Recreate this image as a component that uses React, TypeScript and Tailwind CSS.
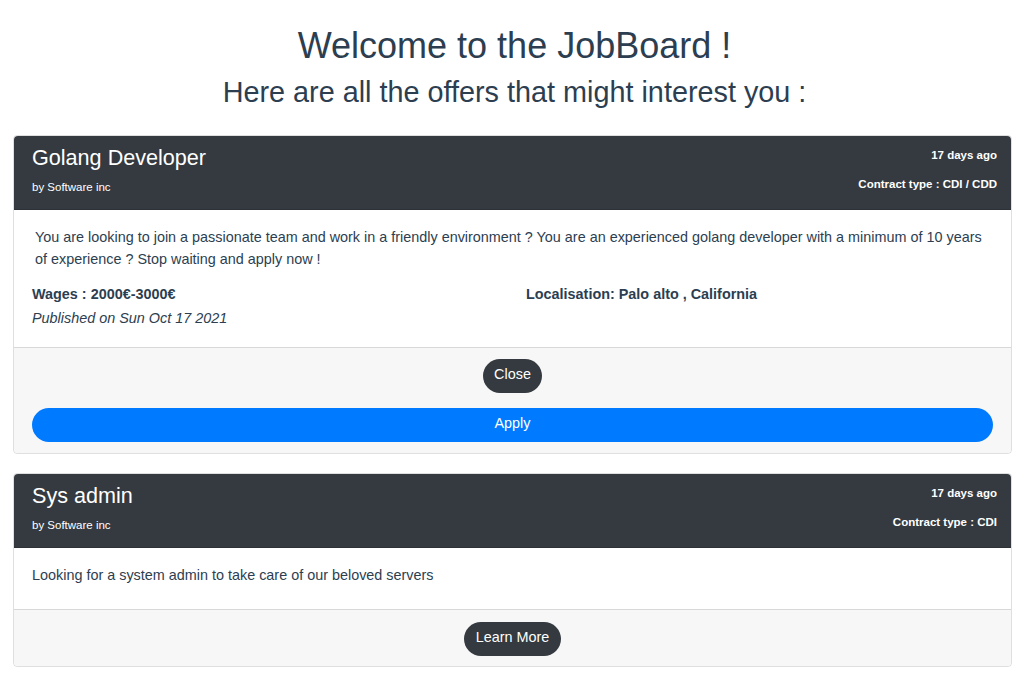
import React from "react";

const font = { fontFamily: '"Liberation Sans", Arial, Helvetica, sans-serif' };

function Header({ title, contract }: { title: string; contract: string }) {
  return (
    <div className="flex justify-between bg-[#343a40] text-white pl-[18px] pr-[14px] pt-[9px] pb-[13px] rounded-t-[4px] border-b border-[rgba(0,0,0,0.125)]">
      <div>
        <div className="text-[21.6px] leading-[26px]">{title}</div>
        <div className="text-[11.5px] leading-[17px] mt-[8px]">by Software inc</div>
      </div>
      <div className="text-right font-bold text-[11.5px]">
        <div className="leading-[17px] mt-[2px]">17 days ago</div>
        <div className="leading-[17px] mt-[12px]">{contract}</div>
      </div>
    </div>
  );
}

export default function App() {
  return (
    <div className="min-h-screen bg-white text-[#2c3e50]" style={font}>
      <div className="text-center pt-[24px]">
        <h1 className="text-[36px] leading-[43px]">Welcome to the JobBoard !</h1>
        <h2 className="text-[28.8px] leading-[35px] mt-[8px]">Here are all the offers that might interest you :</h2>
      </div>
      <div className="pl-[13px] pr-[17px] pt-[25px] pb-[10px] flex flex-col gap-[19px]">
        <div className="border border-[rgba(0,0,0,0.125)] rounded-[4px]">
          <Header title="Golang Developer" contract="Contract type : CDI / CDD" />
          <div className="px-[18px] pt-[17px] pb-[17px] text-[14.4px] leading-[21.6px]">
            <p className="pl-[3px]">
              You are looking to join a passionate team and work in a friendly environment ? You are an experienced golang developer with a minimum of 10 years of experience ? Stop waiting and apply now !
            </p>
            <div className="flex mt-[12px]">
              <div className="w-[494px]">
                <div className="font-bold leading-[24px]">Wages : 2000€-3000€</div>
                <div className="italic leading-[24px]">Published on Sun Oct 17 2021</div>
              </div>
              <div className="font-bold leading-[24px]">Localisation: Palo alto , California</div>
            </div>
          </div>
          <div className="bg-[#f7f7f7] border-t border-[rgba(0,0,0,0.125)] px-[18px] pt-[11px] pb-[11px] flex flex-col items-center rounded-b-[4px]">
            <button className="bg-[#343a40] text-white text-[14.4px] leading-[22px] px-[11px] pt-[4px] pb-[8px] rounded-full">Close</button>
            <button className="w-full mt-[15px] bg-[#007bff] text-white text-[14.4px] leading-[22px] pt-[4px] pb-[8px] rounded-full">Apply</button>
          </div>
        </div>
        <div className="border border-[rgba(0,0,0,0.125)] rounded-[4px]">
          <Header title="Sys admin" contract="Contract type : CDI" />
          <div className="px-[18px] pt-[17px] pb-[22px] text-[14.4px] leading-[21.6px]">
            <p>Looking for a system admin to take care of our beloved servers</p>
          </div>
          <div className="bg-[#f7f7f7] border-t border-[rgba(0,0,0,0.125)] px-[18px] pt-[12px] pb-[10px] flex flex-col items-center rounded-b-[4px]">
            <button className="bg-[#343a40] text-white text-[14.4px] leading-[22px] px-[12px] pt-[4px] pb-[8px] rounded-full">Learn More</button>
          </div>
        </div>
      </div>
    </div>
  );
}
